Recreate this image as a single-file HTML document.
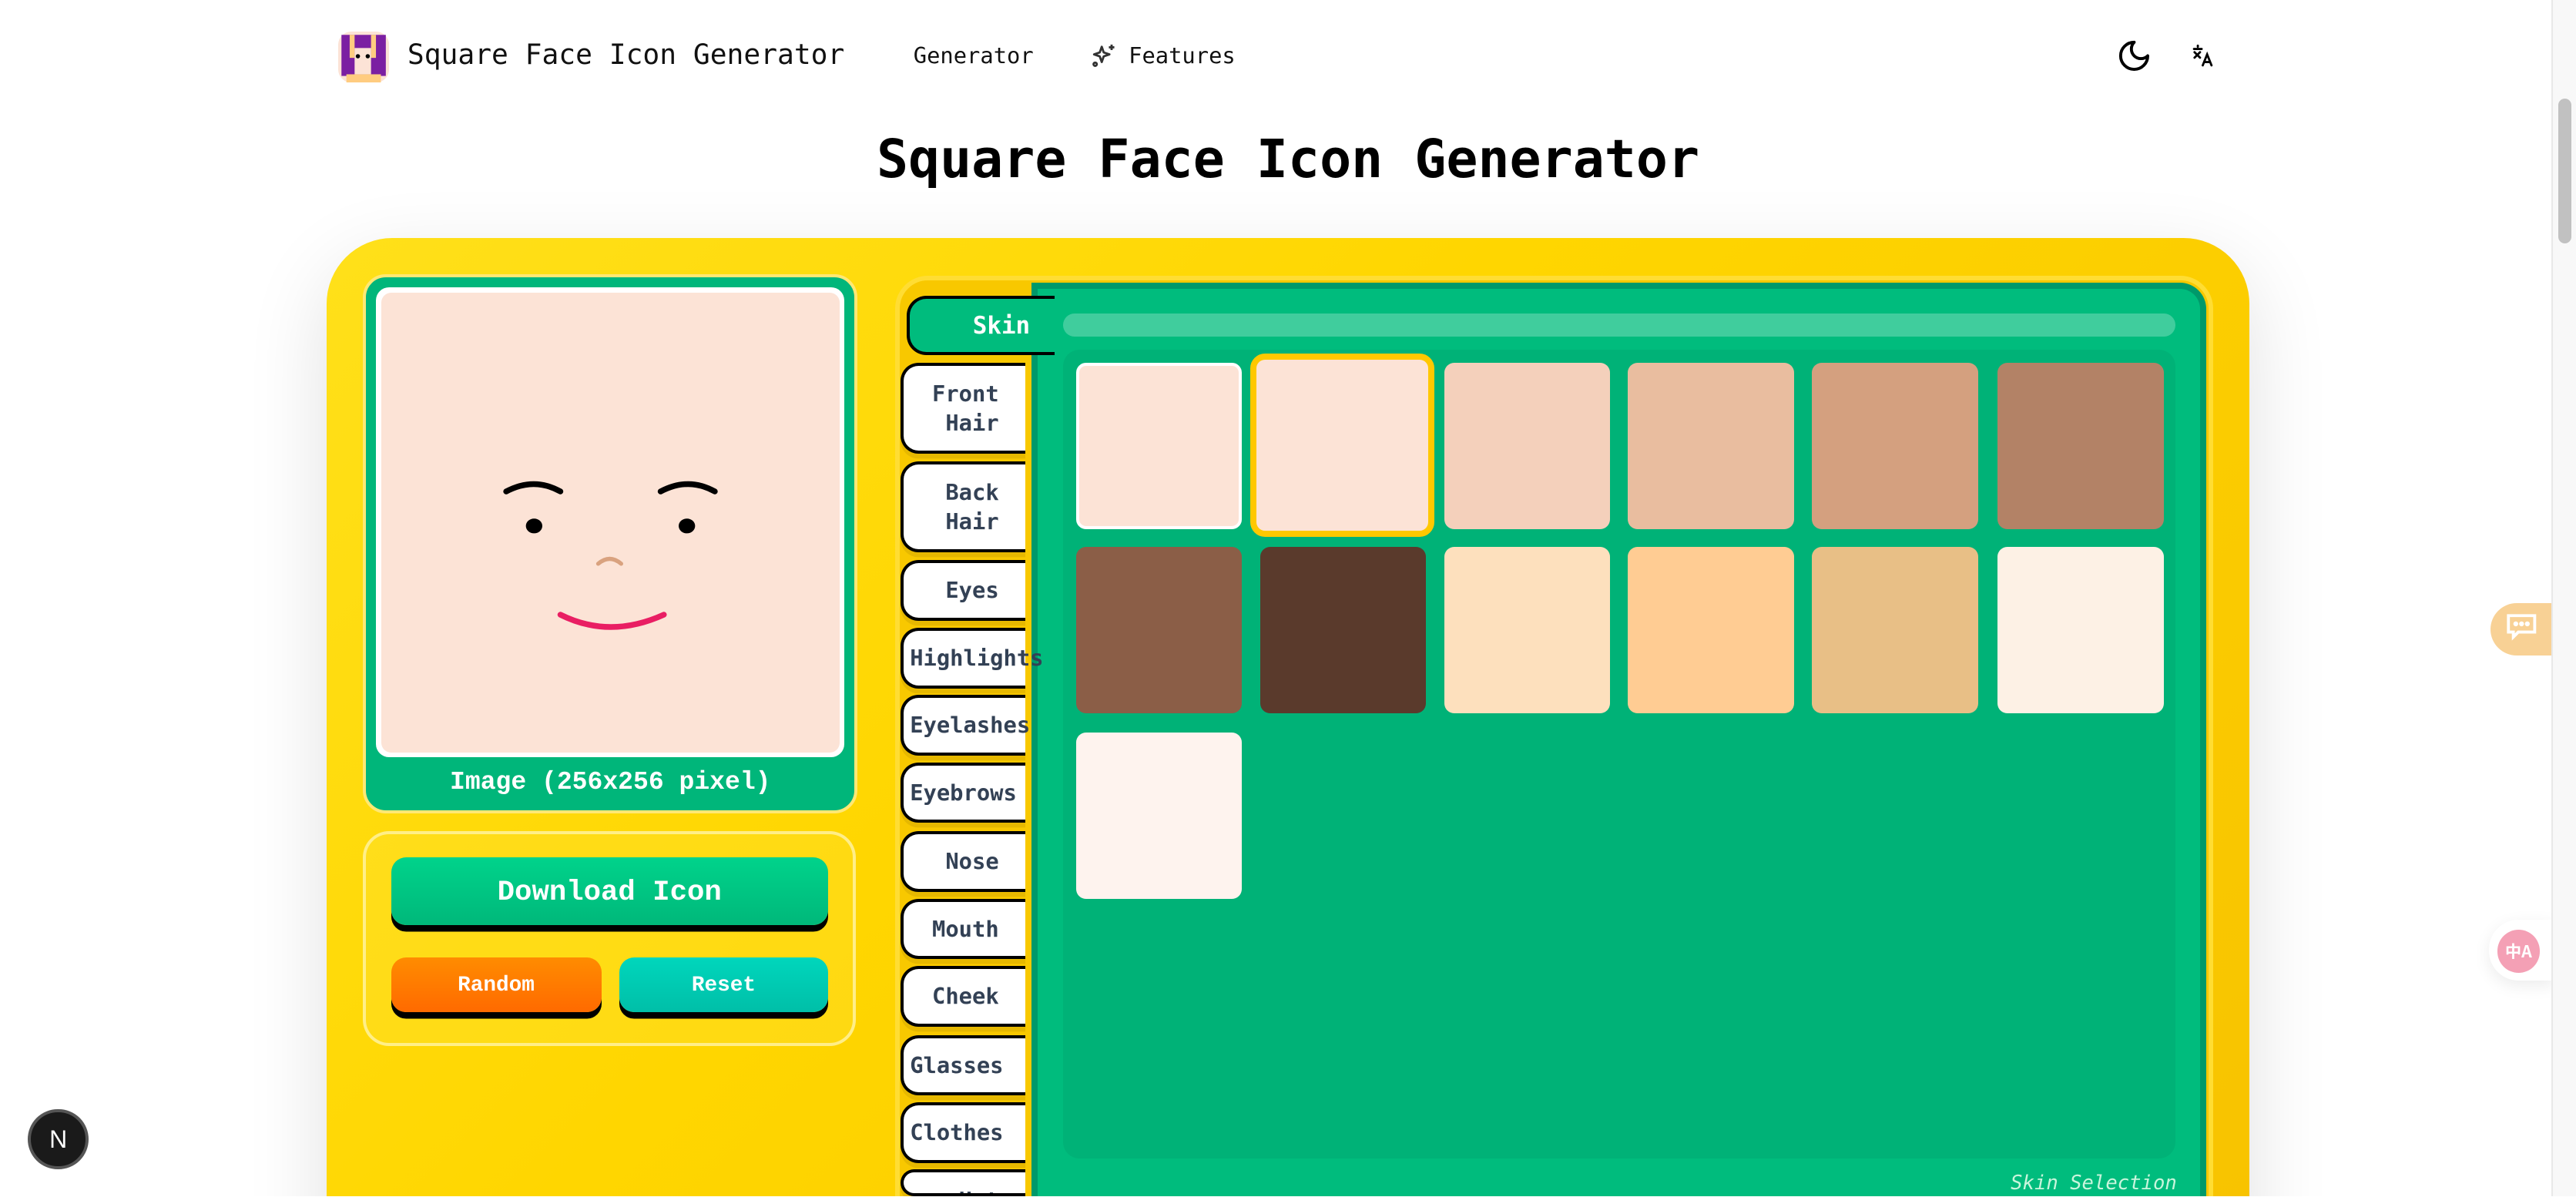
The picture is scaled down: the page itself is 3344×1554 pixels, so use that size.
<!DOCTYPE html>
<html><head><meta charset="utf-8">
<style>
html{zoom:2.13265;overflow:hidden;}
*{box-sizing:border-box;margin:0;padding:0}
body{width:1568px;height:728px;overflow:hidden;background:#fff;font-family:"DejaVu Sans Mono","Liberation Mono",monospace;color:#111}
#wrap{position:relative;width:1568px;height:728px;overflow:hidden}
.abs{position:absolute}
.nav-title{left:248px;top:23px;font-size:17px;color:#111}
.nav-link{font-size:13.5px;top:26px;color:#111}
h1{position:absolute;left:0;width:1568px;text-align:center;top:79px;font-size:32px;font-weight:bold;color:#000}
.card{left:199px;top:145px;width:1170px;height:640px;border-radius:40px;background:linear-gradient(135deg,#ffe01a 0%,#ffd600 40%,#f7c200 100%);box-shadow:0 16px 50px rgba(0,0,0,0.12)}
.imgcard{left:221px;top:167px;width:301px;height:328px;border-radius:14px;background:#00b67a;border:2px solid #ffe874}
.imgframe{left:229px;top:175px;width:285px;height:286px;border-radius:8px;background:#fff}
.face{left:232px;top:178px;width:279px;height:280px;border-radius:6px;background:#fce3d6}
.caption{left:221px;width:301px;top:467px;text-align:center;color:#fff;font-family:"Liberation Mono",monospace;font-weight:bold;font-size:15.5px}
.ctrl{left:221px;top:506px;width:300px;height:131px;border-radius:16px;border:2px solid rgba(255,240,150,0.9);background:rgba(255,230,60,0.3)}
.btn{color:#fff;font-family:"Liberation Mono",monospace;font-weight:bold;text-align:center;border-radius:9px;box-shadow:0 4px 0 #000}
.dl{left:238px;top:522px;width:266px;height:41px;line-height:44px;font-size:17.5px;background:linear-gradient(#00d38b,#00b87a)}
.rnd{left:238px;top:583px;width:128px;height:33px;line-height:35px;font-size:13px;background:linear-gradient(#ff8c00,#ff6a00)}
.rst{left:377px;top:583px;width:127px;height:33px;line-height:35px;font-size:13px;background:linear-gradient(#00d6bc,#00bfa8)}
.frame{left:545px;top:168px;width:802px;height:620px;border-radius:20px;border:3px solid #ffdd33;background:#f8c800}
.green{left:628px;top:172px;width:715px;height:620px;background:#00bc7d;border-left:4px solid #00996a;border-top:4px solid #00996a;border-right:4px solid #00996a;border-radius:0 16px 0 0}
.tab{left:548px;width:76px;background:#fff;border:2px solid #000;border-right:none;border-radius:11px 0 0 11px;box-shadow:0 3px 0 #e6b800;font-weight:bold;font-size:13.5px;color:#334155;text-align:right;padding-right:16px;display:flex;align-items:center;justify-content:flex-end;line-height:18px;white-space:nowrap}
.skin{left:552px;top:180px;width:90px;height:36px;background:#00bc7d;border:2px solid #000;border-right:none;border-radius:12px 0 0 12px;color:#fff;font-weight:bold;font-size:14.5px;text-align:right;padding-right:15px;line-height:33px}
.bar{left:647px;top:191px;width:677px;height:14px;border-radius:7px;background:rgba(255,255,255,0.25)}
.grid{left:647px;top:213px;width:677px;height:492px;border-radius:10px;background:#00b277}
.sw{width:101px;height:101px;border-radius:6px}
.sel-label{left:1100px;width:225px;text-align:right;top:713px;font-style:italic;font-size:12px;color:#c8f5dc}
</style></head><body><div id="wrap">
<svg class="abs" style="left:206px;top:19px" width="31" height="31" viewBox="0 0 31 31">
<rect width="31" height="31" rx="8" fill="#fce3d6"/>
<rect x="2" y="2" width="27" height="25" fill="#7b1fa2"/>
<rect x="7" y="2" width="3" height="14" fill="#ffcc80"/><rect x="20" y="2" width="3" height="14" fill="#ffcc80"/>
<rect x="10" y="10" width="10" height="16" fill="#fce3d6"/>
<circle cx="12" cy="15" r="1.3" fill="#000"/><circle cx="18" cy="15" r="1.3" fill="#000"/>
<rect x="5" y="26" width="21" height="5" fill="#ffcc80"/>
</svg>
<div class="abs nav-title">Square Face Icon Generator</div>
<div class="abs nav-link" style="left:556px">Generator</div>
<svg class="abs" style="left:664px;top:26px" width="16" height="16" viewBox="0 0 24 24" fill="none" stroke="#333" stroke-width="2" stroke-linejoin="round"><path d="M10 4l1.8 5.2L17 11l-5.2 1.8L10 18l-1.8-5.2L3 11l5.2-1.8z"/><path d="M19 2v5M16.5 4.5h5"/><circle cx="4" cy="20" r="1.5"/></svg>
<div class="abs nav-link" style="left:687px">Features</div>
<svg class="abs" style="left:1288px;top:23px" width="22" height="22" viewBox="0 0 24 24" fill="none" stroke="#000" stroke-width="2" stroke-linecap="round" stroke-linejoin="round"><path d="M12 3a6 6 0 0 0 9 9 9 9 0 1 1-9-9z"/></svg>
<svg class="abs" style="left:1332px;top:26px" width="16" height="16" viewBox="0 0 24 24" fill="none" stroke="#000" stroke-width="2" stroke-linecap="round"><path d="M5 6h7M8.5 3v1M5.5 9l5 5M10.5 9l-5 5"/><path d="M13 21l4-10 4 10M14.5 18h5"/></svg>

<h1>Square Face Icon Generator</h1>

<div class="abs card"></div>
<div class="abs imgcard"></div>
<div class="abs imgframe"></div>
<div class="abs face"></div>
<svg class="abs" style="left:232px;top:178px" width="279" height="280" viewBox="0 0 279 280" fill="none" stroke-linecap="round">
<path d="M76 121q17-9 33 0" stroke="#000" stroke-width="3.5"/>
<path d="M170 121q17-9 33 0" stroke="#000" stroke-width="3.5"/>
<ellipse cx="93" cy="142" rx="5" ry="4.5" fill="#000" stroke="none"/>
<ellipse cx="186" cy="142" rx="5" ry="4.5" fill="#000" stroke="none"/>
<path d="M132 165q7-6 14 0" stroke="#d9a27f" stroke-width="2.5"/>
<path d="M109 196q30 15 63 0" stroke="#e91e63" stroke-width="3.5"/>
</svg>
<div class="abs caption">Image (256x256 pixel)</div>

<div class="abs ctrl"></div>
<div class="abs btn dl">Download Icon</div>
<div class="abs btn rnd">Random</div>
<div class="abs btn rst">Reset</div>

<div class="abs frame"></div>
<div class="abs green"></div>
<div class="abs tab" style="top:221px;height:55px"><span style="text-align:center;display:block">Front<br>&nbsp;Hair</span></div>
<div class="abs tab" style="top:281px;height:55px"><span style="text-align:center;display:block">&nbsp;Back<br>&nbsp;Hair</span></div>
<div class="abs tab" style="top:341px;height:37px">Eyes</div>
<div class="abs tab" style="top:382px;height:37px;padding-right:0;justify-content:flex-start;padding-left:4px;overflow:visible">Highlights</div>
<div class="abs tab" style="top:423px;height:37px;padding-right:0;justify-content:flex-start;padding-left:4px">Eyelashes</div>
<div class="abs tab" style="top:464px;height:37px;padding-right:0;justify-content:flex-start;padding-left:4px">Eyebrows</div>
<div class="abs tab" style="top:506px;height:37px">Nose</div>
<div class="abs tab" style="top:547px;height:37px">Mouth</div>
<div class="abs tab" style="top:588px;height:37px">Cheek</div>
<div class="abs tab" style="top:630px;height:37px;padding-right:0;justify-content:flex-start;padding-left:4px">Glasses</div>
<div class="abs tab" style="top:671px;height:37px;padding-right:0;justify-content:flex-start;padding-left:4px">Clothes</div>
<div class="abs tab" style="top:712px;height:16px;align-items:flex-start;padding-top:8px;overflow:hidden">Hat</div>
<div class="abs skin">Skin</div>
<div class="abs bar"></div>
<div class="abs grid"></div>
<div class="abs sw" style="left:655px;top:221px;background:#fce3d6;border:2px solid #fff"></div>
<div class="abs sw" style="left:761px;top:215px;width:112px;height:112px;border-radius:9px;background:#fce3d6;border:4px solid #ffc800"></div>
<div class="abs sw" style="left:879px;top:221px;background:#f4d0bb"></div>
<div class="abs sw" style="left:991px;top:221px;background:#e9bd9f"></div>
<div class="abs sw" style="left:1103px;top:221px;background:#d4a07f"></div>
<div class="abs sw" style="left:1216px;top:221px;background:#b38266"></div>
<div class="abs sw" style="left:655px;top:333px;background:#8b5e47"></div>
<div class="abs sw" style="left:767px;top:333px;background:#5a3a2c"></div>
<div class="abs sw" style="left:879px;top:333px;background:#fde0bd"></div>
<div class="abs sw" style="left:991px;top:333px;background:#ffcc93"></div>
<div class="abs sw" style="left:1103px;top:333px;background:#e8bf86"></div>
<div class="abs sw" style="left:1216px;top:333px;background:#fdf1e5"></div>
<div class="abs sw" style="left:655px;top:446px;background:#fef3ee"></div>
<div class="abs sel-label">Skin Selection</div>

<div class="abs" style="left:1516px;top:367px;width:40px;height:32px;border-radius:16px 0 0 16px;background:#f8d195"></div>
<svg class="abs" style="left:1525px;top:373px" width="20" height="18" viewBox="0 0 20 18" fill="none" stroke="#fff" stroke-width="1.8"><path d="M2 2h16v10H8l-3 3v-3H2z"/><circle cx="6.5" cy="7" r="0.6" fill="#fff"/><circle cx="10" cy="7" r="0.6" fill="#fff"/><circle cx="13.5" cy="7" r="0.6" fill="#fff"/></svg>
<div class="abs" style="left:1515px;top:560px;width:40px;height:37px;border-radius:18px 0 0 18px;background:#fff;box-shadow:0 3px 10px rgba(0,0,0,0.08)"></div>
<div class="abs" style="left:1520px;top:566px;width:26px;height:26px;border-radius:13px;background:#f4a0b5;color:#fff;font-size:10px;font-weight:bold;text-align:center;line-height:26px;font-family:'Noto Sans CJK SC',sans-serif">中A</div>
<div class="abs" style="left:1553px;top:0;width:15px;height:728px;background:#f8f8f8;border-left:1px solid #e8e8e8"></div>
<div class="abs" style="left:1557px;top:60px;width:8px;height:88px;border-radius:4px;background:#c1c1c1"></div>
<div class="abs" style="left:17px;top:675px;width:37px;height:37px;border-radius:50%;background:#1a1a1a;border:2px solid #555;color:#fff;font-family:'Liberation Sans',sans-serif;font-size:15px;text-align:center;line-height:33px">N</div>
</div></body></html>
